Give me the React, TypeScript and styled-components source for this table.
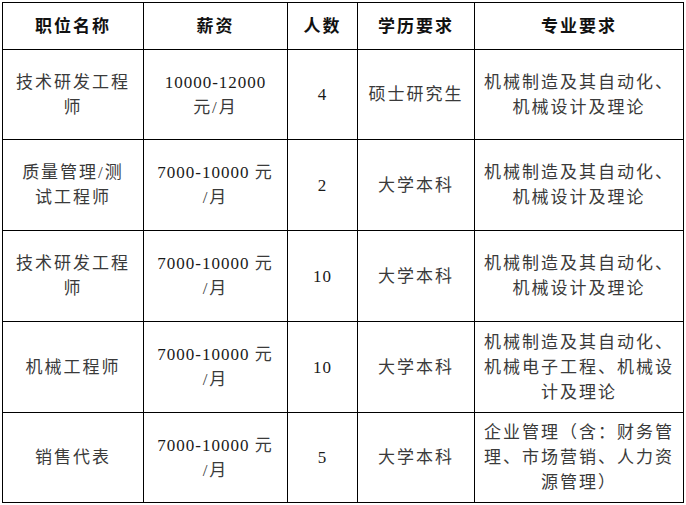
import type { ReactNode } from "react";
import styled, { createGlobalStyle } from "styled-components";

const GlobalStyle = createGlobalStyle`
	html, body {
		margin: 0;
		padding: 0;
		background: #ffffff;
	}
`;

const Page = styled.div`
	padding: 2px 0 0 2px;
`;

const Table = styled.table`
	border-collapse: collapse;
	table-layout: fixed;
	width: 682px;
	font-family: "Liberation Serif", "Noto Sans CJK SC", serif;
`;

const Row = styled.tr<{ $height: number }>`
	height: ${(p) => p.$height}px;
`;

const HeadCell = styled.th`
	border: 1px solid #000;
	padding: 0 4px;
	text-align: center;
	vertical-align: middle;
	font-size: 17px;
	font-weight: 700;
	letter-spacing: 2px;
	color: #111;
	line-height: 25px;
`;

const Cell = styled.td`
	border: 1px solid #000;
	padding: 0 4px;
	text-align: center;
	vertical-align: middle;
	font-size: 17px;
	font-weight: 400;
	letter-spacing: 2px;
	color: #3a3a3a;
	line-height: 25px;
	white-space: nowrap;
`;

const Num = styled.span`
	font-size: 17px;
	letter-spacing: 1px;
	color: #1a1a1a;
`;

type Job = {
	title: ReactNode;
	salary: ReactNode;
	count: string;
	degree: string;
	major: ReactNode;
};

const jobs: Job[] = [
	{
		title: <>技术研发工程<br />师</>,
		salary: <><Num>10000-12000</Num><br />元/月</>,
		count: "4",
		degree: "硕士研究生",
		major: <>机械制造及其自动化、<br />机械设计及理论</>,
	},
	{
		title: <>质量管理/测<br />试工程师</>,
		salary: <><Num>7000-10000 </Num>元<br />/月</>,
		count: "2",
		degree: "大学本科",
		major: <>机械制造及其自动化、<br />机械设计及理论</>,
	},
	{
		title: <>技术研发工程<br />师</>,
		salary: <><Num>7000-10000 </Num>元<br />/月</>,
		count: "10",
		degree: "大学本科",
		major: <>机械制造及其自动化、<br />机械设计及理论</>,
	},
	{
		title: "机械工程师",
		salary: <><Num>7000-10000 </Num>元<br />/月</>,
		count: "10",
		degree: "大学本科",
		major: <>机械制造及其自动化、<br />机械电子工程、机械设<br />计及理论</>,
	},
	{
		title: "销售代表",
		salary: <><Num>7000-10000 </Num>元<br />/月</>,
		count: "5",
		degree: "大学本科",
		major: <>企业管理（含：财务管<br />理、市场营销、人力资<br />源管理）</>,
	},
];

const rowHeights = [90, 91, 91, 91, 90];

const App = () => {
	return (
		<Page>
			<GlobalStyle />
			<Table>
				<colgroup>
					<col style={{ width: 141 }} />
					<col style={{ width: 144 }} />
					<col style={{ width: 70 }} />
					<col style={{ width: 117 }} />
					<col style={{ width: 209 }} />
				</colgroup>
				<thead>
					<Row $height={47}>
						<HeadCell>职位名称</HeadCell>
						<HeadCell>薪资</HeadCell>
						<HeadCell>人数</HeadCell>
						<HeadCell>学历要求</HeadCell>
						<HeadCell>专业要求</HeadCell>
					</Row>
				</thead>
				<tbody>
					{jobs.map((job, i) => (
						<Row key={i} $height={rowHeights[i]}>
							<Cell>{job.title}</Cell>
							<Cell>{job.salary}</Cell>
							<Cell><Num>{job.count}</Num></Cell>
							<Cell>{job.degree}</Cell>
							<Cell>{job.major}</Cell>
						</Row>
					))}
				</tbody>
			</Table>
		</Page>
	);
};

export default App;
